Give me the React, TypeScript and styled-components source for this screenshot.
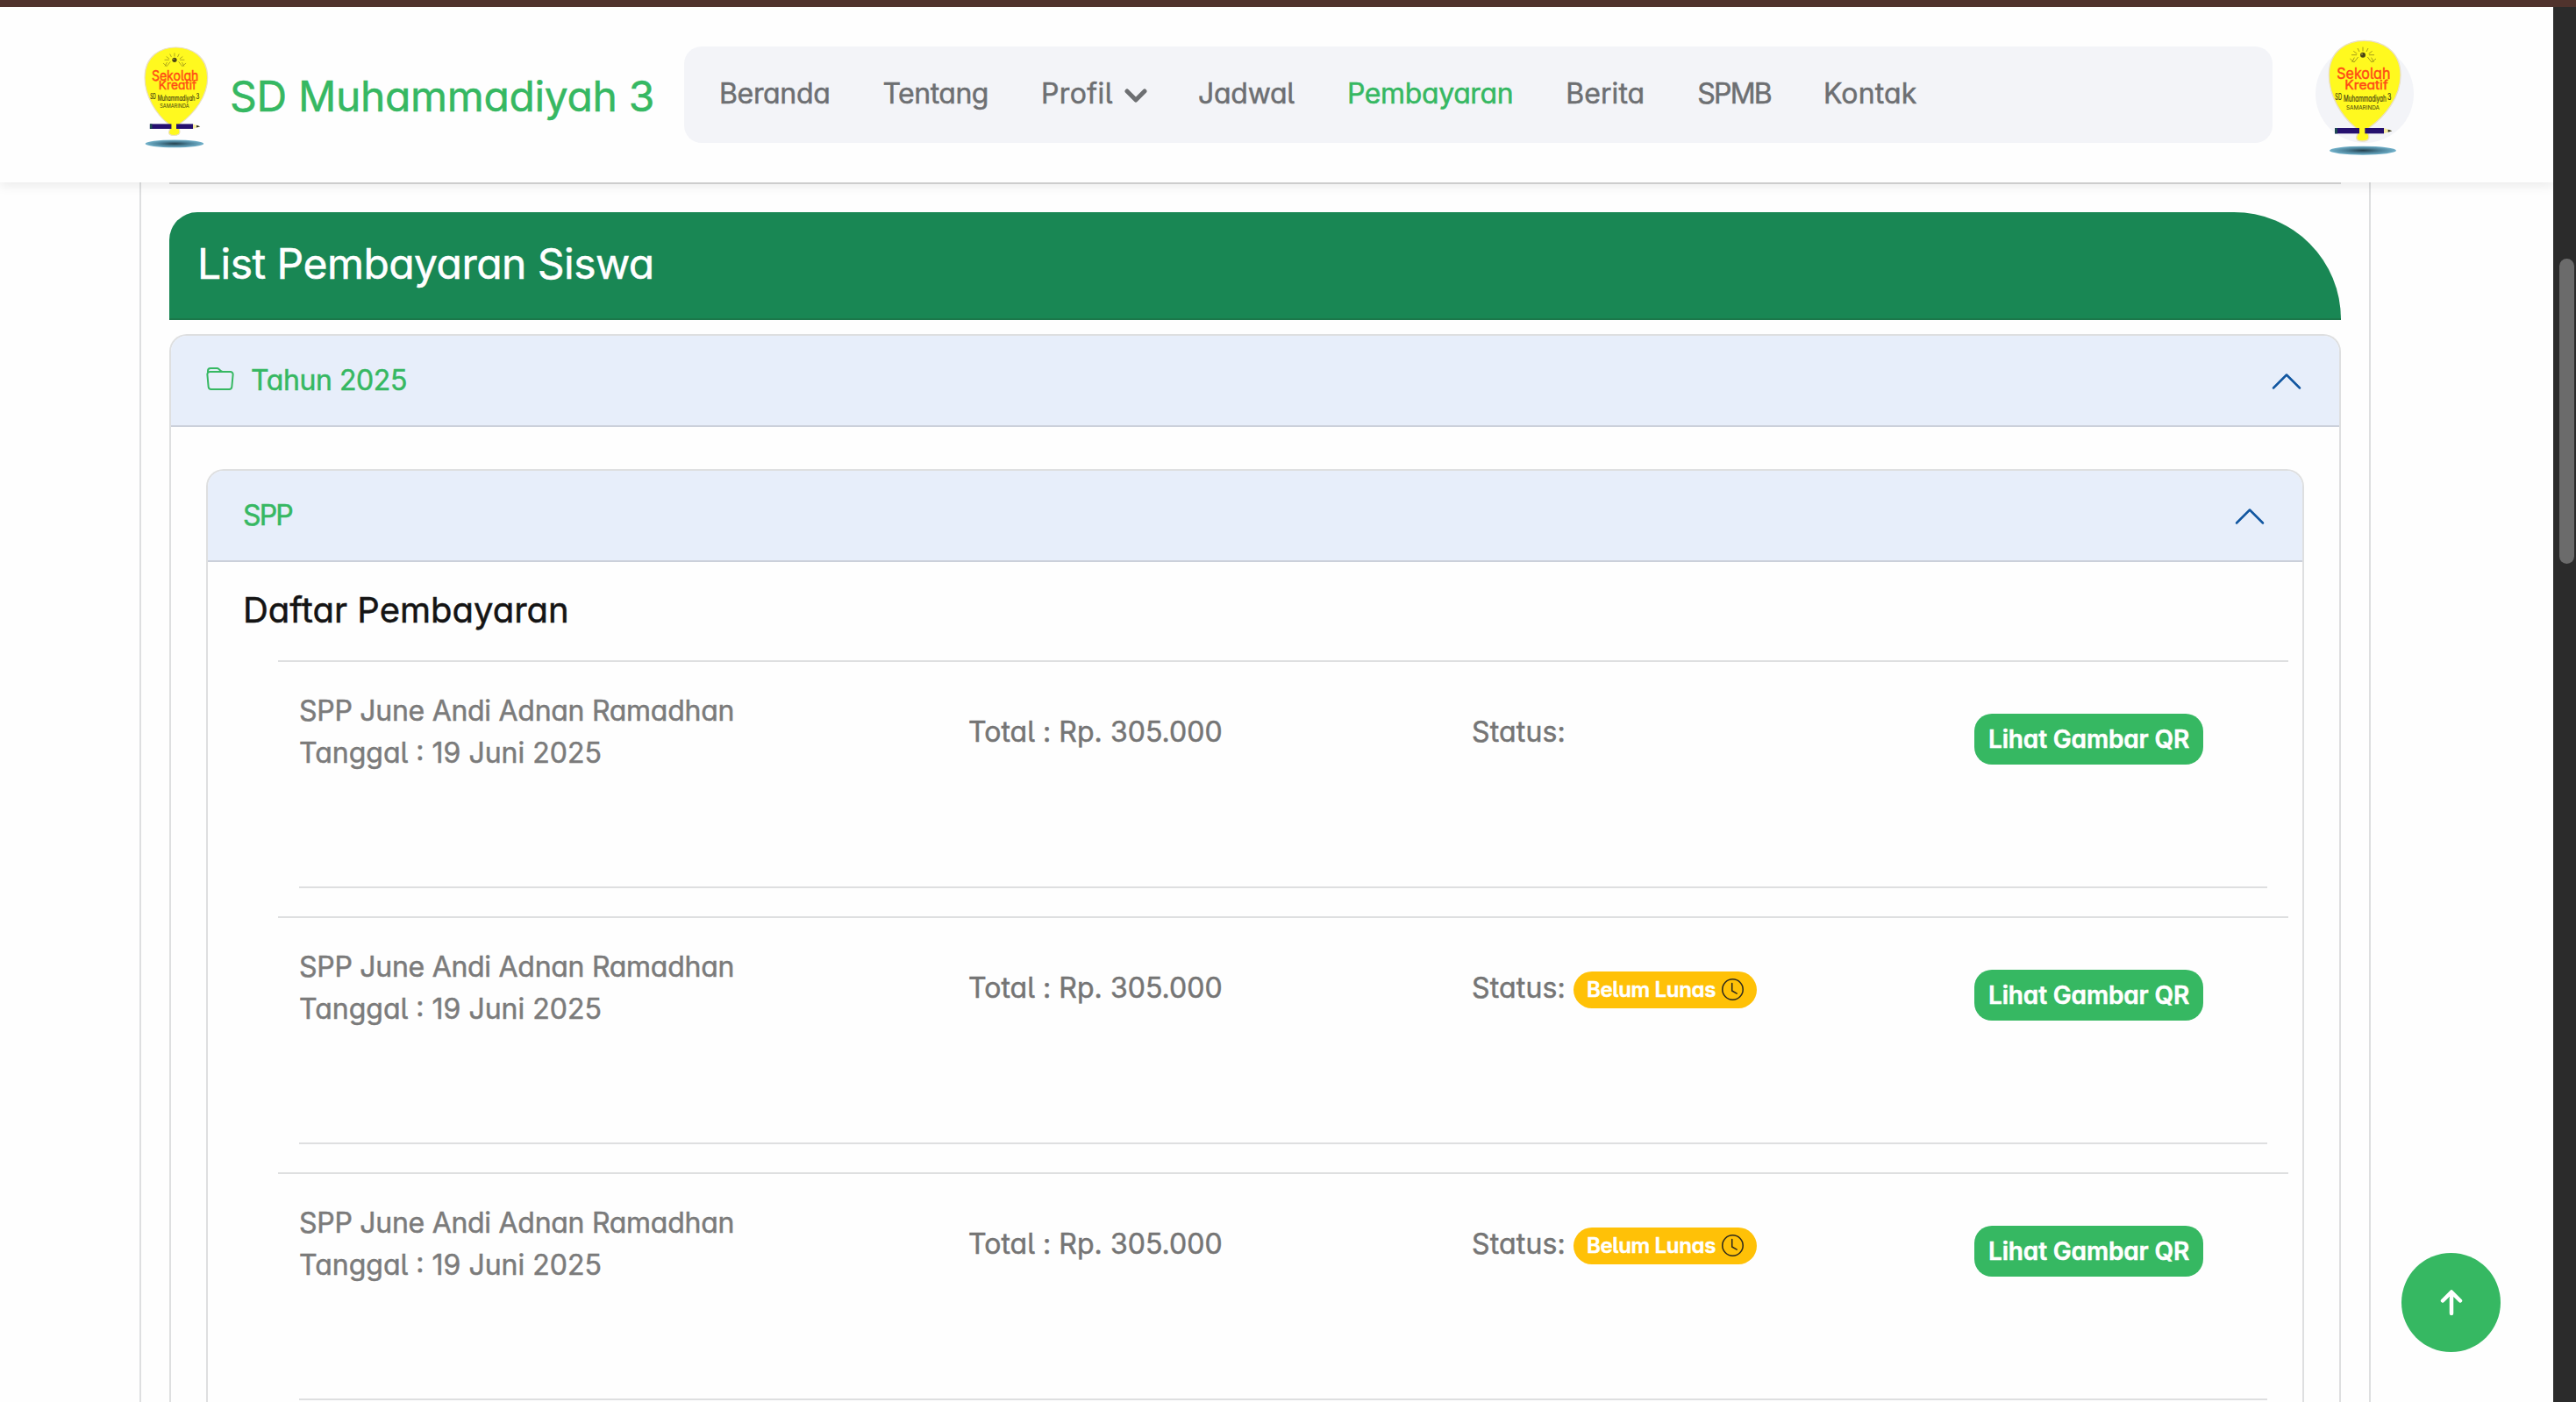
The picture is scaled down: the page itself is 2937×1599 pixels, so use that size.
import React from 'react';
import styled, { createGlobalStyle } from 'styled-components';
import { BsFolder, BsClock } from 'react-icons/bs';

const green = '#36b862';
const line = '#dedfe0';

const GlobalStyle = createGlobalStyle`
  *, *::before, *::after { box-sizing: border-box; }
  body {
    margin: 0;
    background: #fefefe;
    font-family: Inter, 'Noto Sans', sans-serif;
    font-feature-settings: 'cv11' 1, 'cv05' 1;
    font-size: 32px;
    line-height: 48px;
    color: #7b7b7b;
    -webkit-text-stroke: 0.5px currentColor;
  }
  h1, h2, h3, p { margin: 0; font-weight: 400; }
`;

const Window = styled.div`
  display: flex;
  flex-direction: column;
  width: 2937px;
  height: 1599px;
  overflow: hidden;
`;

const WindowEdge = styled.div`
  flex: none;
  height: 8px;
  background: #50332d;
`;

const Stage = styled.div`
  display: flex;
  flex: 1;
  min-height: 0;
`;

const Viewport = styled.div`
  position: relative;
  display: flex;
  flex-direction: column;
  flex: 1;
  min-width: 0;
  overflow: hidden;
`;

const ScrollTrack = styled.div`
  width: 26px;
  padding: 287px 2px 0 7px;
  background: #2b2b2b;
`;

const ScrollThumb = styled.div`
  height: 348px;
  border-radius: 9px;
  background: #6b6b6b;
`;

const Header = styled.header`
  position: relative;
  z-index: 2;
  flex: none;
  display: flex;
  align-items: center;
  height: 200px;
  padding-left: 163px;
  background: #fefefe;
  box-shadow: 0 4px 12px rgba(0, 0, 0, 0.08);
`;

const Brand = styled.a`
  display: flex;
  align-items: center;
  gap: 23px;
  width: 617px;
  padding-top: 4px;
`;

const BrandName = styled.h1`
  font-size: 48px;
  line-height: 60px;
  letter-spacing: -0.34px;
  white-space: nowrap;
  color: ${green};
`;

const Nav = styled.nav`
  display: flex;
  align-items: center;
  gap: 60px;
  width: 1811px;
  height: 110px;
  margin-bottom: 1px;
  padding: 0 40px 2px;
  border-radius: 20px;
  background: #f3f4f8;
`;

const NavLink = styled.a<{ $active?: boolean; $track: number }>`
  display: flex;
  align-items: center;
  white-space: nowrap;
  letter-spacing: ${(p) => p.$track}px;
  color: ${(p) => (p.$active ? green : '#6d6f72')};
`;

const Caret = styled.svg`
  width: 26px;
  height: 16px;
  margin: 5px -2px 0 13px;
`;

const Avatar = styled.div`
  position: relative;
  width: 112px;
  height: 112px;
  margin: 0 0 2px 49px;
  border-radius: 50%;
  background: #f3f4f8;
`;

const AvatarImage = styled.div`
  position: absolute;
  left: 13px;
  top: -8px;
`;

const LogoSvg = styled.svg`
  display: block;
  overflow: visible;
  font-family: Inter, sans-serif;
  -webkit-text-stroke: 0;
`;

const Card = styled.main`
  display: flex;
  flex-direction: column;
  flex: 1;
  width: 2544px;
  margin-left: 159px;
  padding: 0 32px;
  border: 2px solid ${line};
  border-width: 0 2px;
`;

const Divider = styled.div`
  flex: none;
  height: 2px;
  margin-bottom: 32px;
  background: #d9d9d9;
`;

const ListHeader = styled.div`
  display: flex;
  align-items: center;
  flex: none;
  height: 123px;
  margin-bottom: 16px;
  padding: 0 32px 3px;
  border-bottom: 2px solid #1b774a;
  border-radius: 32px 122px 0 0;
  background: #198754;
`;

const ListTitle = styled.h2`
  font-size: 48px;
  line-height: 58px;
  letter-spacing: -0.54px;
  color: #fff;
`;

const Accordion = styled.section`
  display: flex;
  flex-direction: column;
  flex: 1;
  border: 2px solid ${line};
  border-bottom: 0;
  border-radius: 20px 20px 0 0;
`;

const AccordionHeader = styled.div`
  display: flex;
  align-items: center;
  flex: none;
  height: 104px;
  padding: 0 40px;
  border-bottom: 2px solid #cbd0da;
  border-radius: 18px 18px 0 0;
  background: #e7eefa;
  color: ${green};
`;

const AccordionLabel = styled.span<{ $track: number }>`
  flex: 1;
  letter-spacing: ${(p) => p.$track}px;
`;

const FolderIcon = styled(BsFolder)`
  width: 32px;
  height: 32px;
  margin: 0 19px 3px 0;
`;

const ChevronIcon = styled.svg`
  width: 40px;
  height: 40px;
  margin-top: 2px;
`;

const AccordionBody = styled.div`
  display: flex;
  flex-direction: column;
  flex: 1;
  padding: 48px 40px 0;
`;

const PaymentBody = styled.div`
  padding: 31px 16px 0 40px;
`;

const PaymentTitle = styled.h3`
  margin-bottom: 33px;
  font-size: 40px;
  color: #141414;
`;

const PaymentList = styled.div`
  margin-left: 40px;
`;

const Payment = styled.article`
  height: 292px;
  padding: 0 24px 32px;
  border-top: 2px solid ${line};
`;

const PaymentGrid = styled.div`
  display: grid;
  grid-template-columns: 763px 574px 573px 1fr;
  align-items: start;
  height: 258px;
  border-bottom: 2px solid ${line};
`;

const Info = styled.div`
  padding-top: 32px;
`;

const Text = styled.p<{ $track?: number }>`
  letter-spacing: ${(p) => p.$track ?? 0}px;
  white-space: nowrap;
`;

const Amount = styled(Text)`
  padding-top: 56px;
  color: #757575;
`;

const Status = styled.div`
  display: flex;
  align-items: center;
  height: 48px;
  margin-top: 56px;
  gap: 9px;
  color: #757575;
`;

const Badge = styled.span`
  display: flex;
  align-items: center;
  gap: 7px;
  height: 42px;
  margin-top: 3px;
  padding: 0 15px;
  border-radius: 21px;
  background: #ffc107;
  color: #fff;
  font-size: 24px;
  font-weight: 600;
  letter-spacing: -0.33px;
`;

const ClockIcon = styled(BsClock)`
  width: 25px;
  height: 25px;
  margin-bottom: 1px;
  color: #2e2a1c;
`;

const QrButton = styled.button`
  width: 261px;
  height: 58px;
  margin-top: 59px;
  padding: 0 0 1px;
  border: 0;
  border-radius: 20px;
  background: ${green};
  color: #fff;
  font: 600 28px Inter, sans-serif;
  font-feature-settings: inherit;
  letter-spacing: -0.16px;
  white-space: nowrap;
`;

const ScrollTop = styled.button`
  position: absolute;
  left: 2738px;
  top: 1421px;
  display: flex;
  align-items: center;
  justify-content: center;
  width: 113px;
  height: 113px;
  padding: 0;
  border: 0;
  border-radius: 50%;
  background: ${green};
`;

function Logo({ width, height }: { width: number; height: number }) {
  return (
    <LogoSvg width={width} height={height} viewBox="40 20 260 405">
      <defs>
        <radialGradient id="shade">
          <stop offset="0" stopColor="#25404c" />
          <stop offset="0.5" stopColor="#4b8097" />
          <stop offset="1" stopColor="#72b2cb" />
        </radialGradient>
      </defs>
      <ellipse cx="163" cy="406" rx="114" ry="15" fill="url(#shade)" />
      <path
        d="M168 30C224 30 292 62 292 148C292 222 240 288 186 327C178 333 176 342 183 354C186 366 180 374 161 374C142 374 138 366 143 354C150 342 146 334 137 327C92 290 47 222 47 148C47 62 112 30 168 30Z"
        fill="#fff91f"
        stroke="#e9dfc6"
        strokeWidth="4"
      />
      <g stroke="#8f8518" strokeWidth="2.4" fill="none">
        <path d="M163 52V66M145 56L151 68M181 56L175 68M131 66L143 75M195 66L183 75M124 79H142M202 79H184" />
        <path d="M147 86L133 104L119 92M179 86L193 104L208 92M134 88L126 104M192 88L200 104" />
      </g>
      <circle cx="163" cy="79" r="9" fill="#4a4416" />
      <circle cx="160" cy="76" r="2.5" fill="#bdb13a" />
      <g fill="#ff4a16" stroke="#ff4a16" strokeWidth="1.4">
        <text x="74" y="161" fontSize="52" textLength="183" lengthAdjust="spacingAndGlyphs">Sekolah</text>
        <text x="101" y="196" fontSize="44" textLength="148" lengthAdjust="spacingAndGlyphs">Kreatif</text>
      </g>
      <g fill="#3f3c10" stroke="#3f3c10" strokeWidth="0.6" fontSize="31">
        <text x="68" y="233" textLength="23" lengthAdjust="spacingAndGlyphs">SD</text>
        <text x="97" y="239" textLength="146" lengthAdjust="spacingAndGlyphs">Muhammadiyah</text>
        <text x="247" y="233" textLength="13" lengthAdjust="spacingAndGlyphs">3</text>
      </g>
      <text x="106" y="265" fontSize="20" fill="#3f3c10" textLength="114" lengthAdjust="spacingAndGlyphs">SAMARINDA</text>
      <rect x="67" y="329" width="84" height="19" fill="#25106f" />
      <rect x="67" y="329" width="9" height="19" fill="#1d4a52" />
      <rect x="170" y="329" width="65" height="19" fill="#25106f" />
      <path d="M235 329L263 338.500L235 348Z" fill="#f3eba0" />
      <path d="M249 334L263 338.500L249 343Z" fill="#2b2b20" />
    </LogoSvg>
  );
}

function ChevronUp() {
  return (
    <ChevronIcon viewBox="0 0 16 16" fill="none" stroke="#1156a0" strokeLinecap="round" strokeLinejoin="round">
      <path d="M2 11L8 5L14 11" />
    </ChevronIcon>
  );
}

const links = [
  { label: 'Beranda', track: -0.34 },
  { label: 'Tentang', track: -0.5 },
  { label: 'Profil', track: 0.409, menu: true },
  { label: 'Jadwal', track: -0.245 },
  { label: 'Pembayaran', track: -0.38 },
  { label: 'Berita', track: 0.06 },
  { label: 'SPMB', track: -1.8 },
  { label: 'Kontak', track: 0.16 },
];

const current = 'Pembayaran';

const payments = [
  { id: 1, unpaid: false },
  { id: 2, unpaid: true },
  { id: 3, unpaid: true },
];

function PaymentRow({ unpaid }: { unpaid: boolean }) {
  return (
    <Payment>
      <PaymentGrid>
        <Info>
          <Text $track={-0.28}>SPP June Andi Adnan Ramadhan</Text>
          <Text>Tanggal : 19 Juni 2025</Text>
        </Info>
        <Amount $track={0.03}>Total : Rp. 305.000</Amount>
        <Status>
          <Text $track={0.174}>Status:</Text>
          {unpaid && (
            <Badge>
              Belum Lunas
              <ClockIcon />
            </Badge>
          )}
        </Status>
        <QrButton>Lihat Gambar QR</QrButton>
      </PaymentGrid>
    </Payment>
  );
}

export default function App() {
  return (
    <Window>
      <GlobalStyle />
      <WindowEdge />
      <Stage>
        <Viewport>
          <Header>
            <Brand>
              <Logo width={76} height={118.5} />
              <BrandName>SD Muhammadiyah 3</BrandName>
            </Brand>
            <Nav>
              {links.map((l) => (
                <NavLink key={l.label} $active={l.label === current} $track={l.track}>
                  {l.label}
                  {l.menu && (
                    <Caret viewBox="0 0 26 16" fill="none" stroke="currentColor" strokeWidth="5" strokeLinecap="round" strokeLinejoin="round">
                      <path d="M3 3L13 13L23 3" />
                    </Caret>
                  )}
                </NavLink>
              ))}
            </Nav>
            <Avatar>
              <AvatarImage>
                <Logo width={86.7} height={135} />
              </AvatarImage>
            </Avatar>
          </Header>
          <Card>
            <Divider />
            <ListHeader>
              <ListTitle>List Pembayaran Siswa</ListTitle>
            </ListHeader>
            <Accordion>
              <AccordionHeader>
                <FolderIcon />
                <AccordionLabel $track={-0.417}>Tahun 2025</AccordionLabel>
                <ChevronUp />
              </AccordionHeader>
              <AccordionBody>
                <Accordion>
                  <AccordionHeader>
                    <AccordionLabel $track={-1.9}>SPP</AccordionLabel>
                    <ChevronUp />
                  </AccordionHeader>
                  <PaymentBody>
                    <PaymentTitle>Daftar Pembayaran</PaymentTitle>
                    <PaymentList>
                      {payments.map((p) => (
                        <PaymentRow key={p.id} unpaid={p.unpaid} />
                      ))}
                    </PaymentList>
                  </PaymentBody>
                </Accordion>
              </AccordionBody>
            </Accordion>
          </Card>
          <ScrollTop aria-label="Ke atas">
            <svg width="30" height="34" viewBox="0 0 30 34" fill="none" stroke="#fff" strokeWidth="4.5" strokeLinecap="round" strokeLinejoin="round">
              <path d="M15 29V5M5 14.500L15 4.500L25 14.500" />
            </svg>
          </ScrollTop>
        </Viewport>
        <ScrollTrack>
          <ScrollThumb />
        </ScrollTrack>
      </Stage>
    </Window>
  );
}
